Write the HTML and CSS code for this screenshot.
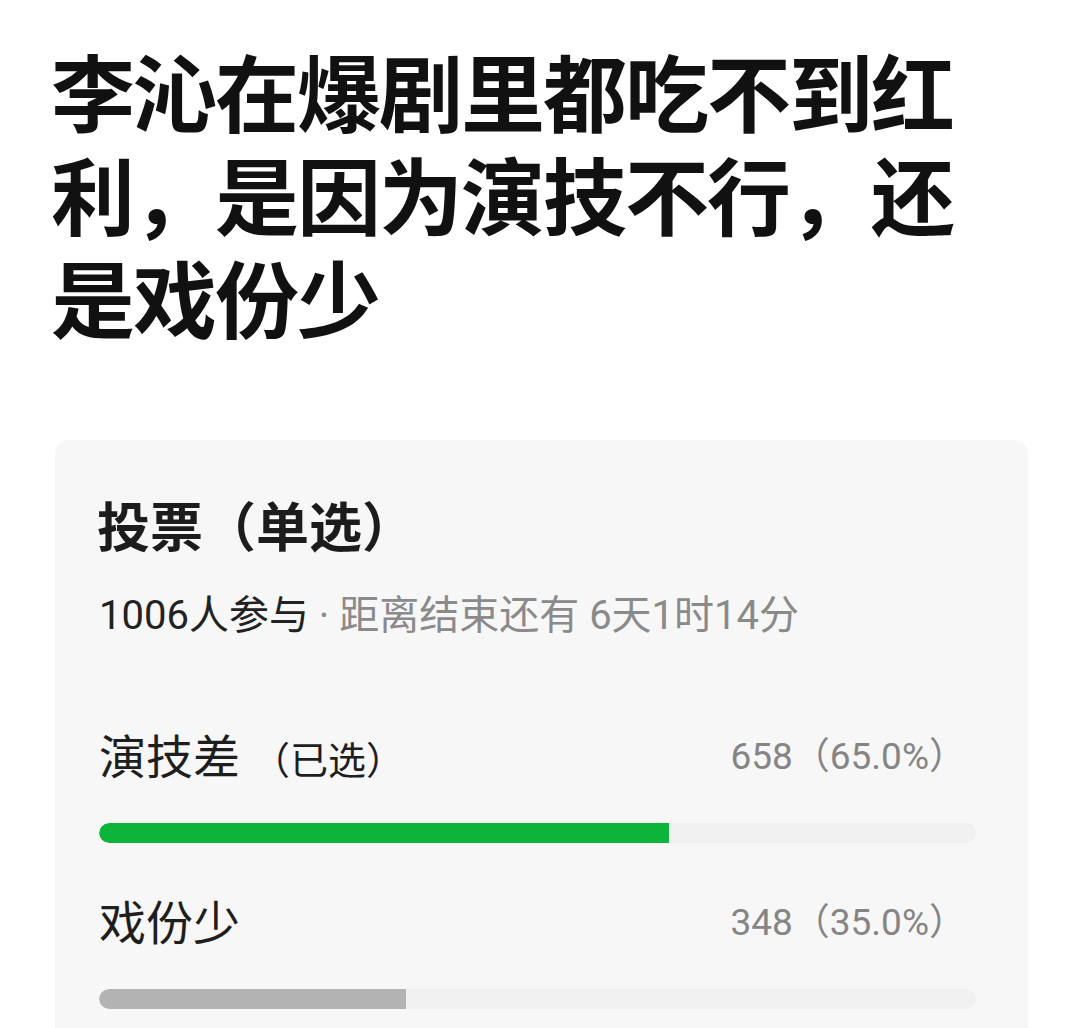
FILE: index.html
```html
<!DOCTYPE html>
<html lang="zh-CN">
<head>
    <meta charset="UTF-8">
    <meta name="viewport" content="width=device-width, initial-scale=1.0">
    <title>投票</title>
    <link rel="stylesheet" href="styles.css">
</head>
<body>
    <h1 class="post-title">李沁在爆剧里都吃不到红利，是因为演技不行，还是戏份少</h1>

    <!-- Poll Card -->
    <div class="poll-card">
        <h2 class="poll-title">投票（单选）</h2>
        <p class="poll-meta">1006人参与<span class="muted"> · 距离结束还有 6天1时14分</span></p>

        <div class="poll-options">
            <div class="option">
                <div class="option-row">
                    <span class="option-label">演技差<span class="picked">（已选）</span></span>
                    <span class="option-count">658（65.0%）</span>
                </div>
                <div class="bar-track">
                    <div class="bar-fill selected" style="width: 65%"></div>
                </div>
            </div>

            <div class="option">
                <div class="option-row">
                    <span class="option-label">戏份少</span>
                    <span class="option-count">348（35.0%）</span>
                </div>
                <div class="bar-track">
                    <div class="bar-fill" style="width: 35%"></div>
                </div>
            </div>
        </div>
    </div>
</body>
</html>
```

FILE: styles.css
```css
/* Global Styles */
body {
    font-family: Roboto, 'Noto Sans CJK SC', sans-serif;
    margin: 0;
    padding: 0;
    background-color: #ffffff;
    color: #1a1a1a;
    height: 1028px;
    overflow: hidden;
}

/* Post Title */
.post-title {
    font-family: 'Noto Sans CJK SC', sans-serif;
    font-size: 84px;
    font-weight: 700;
    line-height: 103px;
    letter-spacing: -2px;
    color: #111;
    margin: 38px 0 0 51px;
    width: 930px;
}

/* Poll Card */
.poll-card {
    margin: 93px 0 0 55px;
    width: 973px;
    box-sizing: border-box;
    padding: 53px 48px 40px 44px;
    background-color: #f7f7f7;
    border-radius: 14px;
}

.poll-title {
    font-family: 'Noto Sans CJK SC', sans-serif;
    font-size: 53px;
    font-weight: 700;
    line-height: 62px;
    margin: 0 0 0 -2px;
    color: #1c1c1c;
}

.poll-meta {
    font-size: 40px;
    line-height: 46px;
    margin: 38px 0 0 0;
    color: #222;
}

.muted {
    color: #8a8a8a;
}

/* Options */
.poll-options {
    margin-top: 86px;
}

.option + .option {
    margin-top: 48px;
}

.option-row {
    display: flex;
    justify-content: space-between;
    align-items: center;
    height: 56px;
    padding-right: 14px;
}

.option-label {
    font-size: 47px;
    color: #1e1e1e;
}

.picked {
    font-size: 38px;
    margin-left: 12px;
}

.option-count {
    font-size: 37px;
    color: #858585;
}

.bar-track {
    margin-top: 42px;
    height: 20px;
    width: 877px;
    background-color: #f0f0f0;
    border-radius: 10px;
    overflow: hidden;
}

.bar-fill {
    height: 100%;
    background-color: #b3b3b3;
    border-radius: 10px 0 0 10px;
}

.bar-fill.selected {
    background-color: #0cb43a;
}
```
